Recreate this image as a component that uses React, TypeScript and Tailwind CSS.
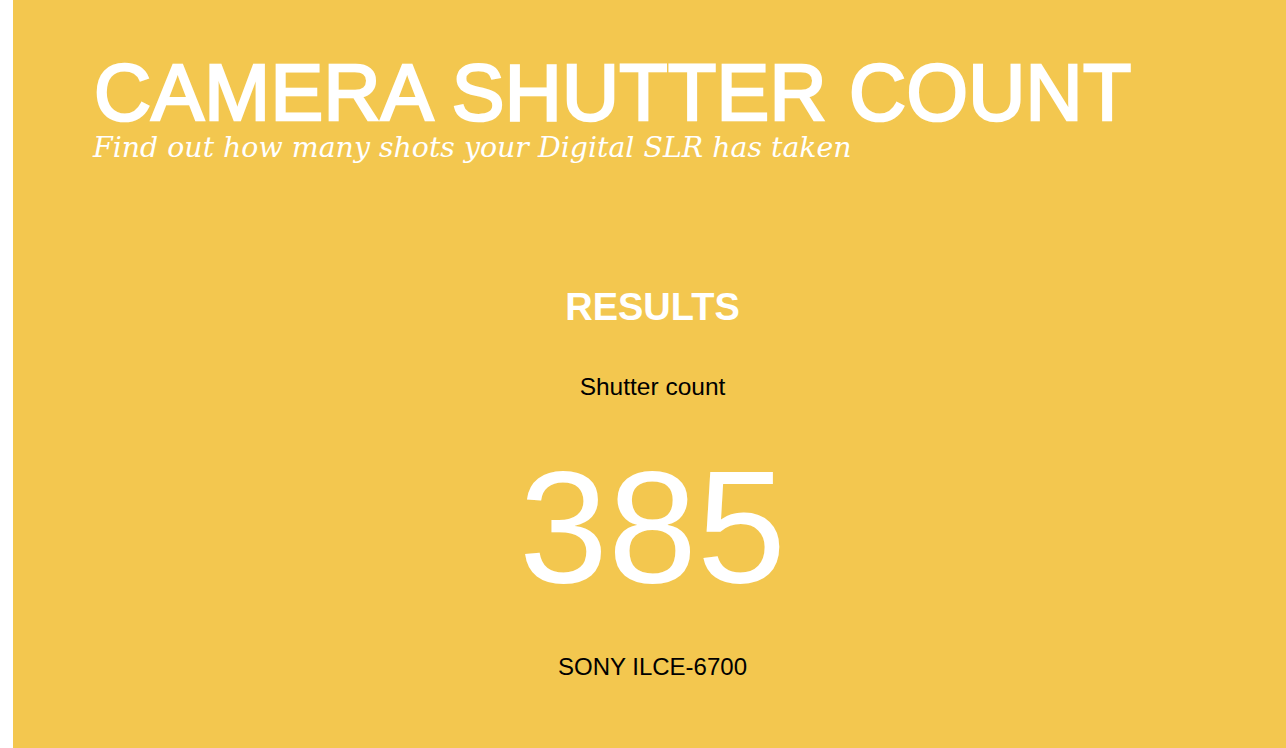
import React from "react";

export default function App() {
  return (
    <div className="min-h-screen w-full bg-white pl-[13px]">
      <div className="min-h-[748px] bg-[#f3c74f] pl-[80px] pt-[53px] pb-[60px] font-['Liberation_Sans',Arial,sans-serif]">
        <h1 className="text-[79px] leading-none font-normal text-white whitespace-nowrap tracking-[0.3px] [-webkit-text-stroke-width:2.6px] [-webkit-text-stroke-color:#ffffff] [paint-order:stroke_fill] pl-[1px]">
          CAMERA SHUTTER COUNT
        </h1>
        <p className="mt-[2px] text-[28.4px] leading-none italic text-white font-['DejaVu_Serif',Georgia,serif] whitespace-nowrap">
          Find out how many shots your Digital SLR has taken
        </p>
        <div className="-ml-[80px] pl-[6px] flex flex-col items-center">
          <h2 className="mt-[126px] text-[38px] leading-none font-bold text-white">RESULTS</h2>
          <p className="mt-[49px] text-[24.5px] leading-none text-black">Shutter count</p>
          <p className="mt-[47px] text-[160px] leading-none text-white">385</p>
          <p className="mt-[48px] text-[24px] leading-none text-black">SONY ILCE-6700</p>
        </div>
      </div>
    </div>
  );
}
